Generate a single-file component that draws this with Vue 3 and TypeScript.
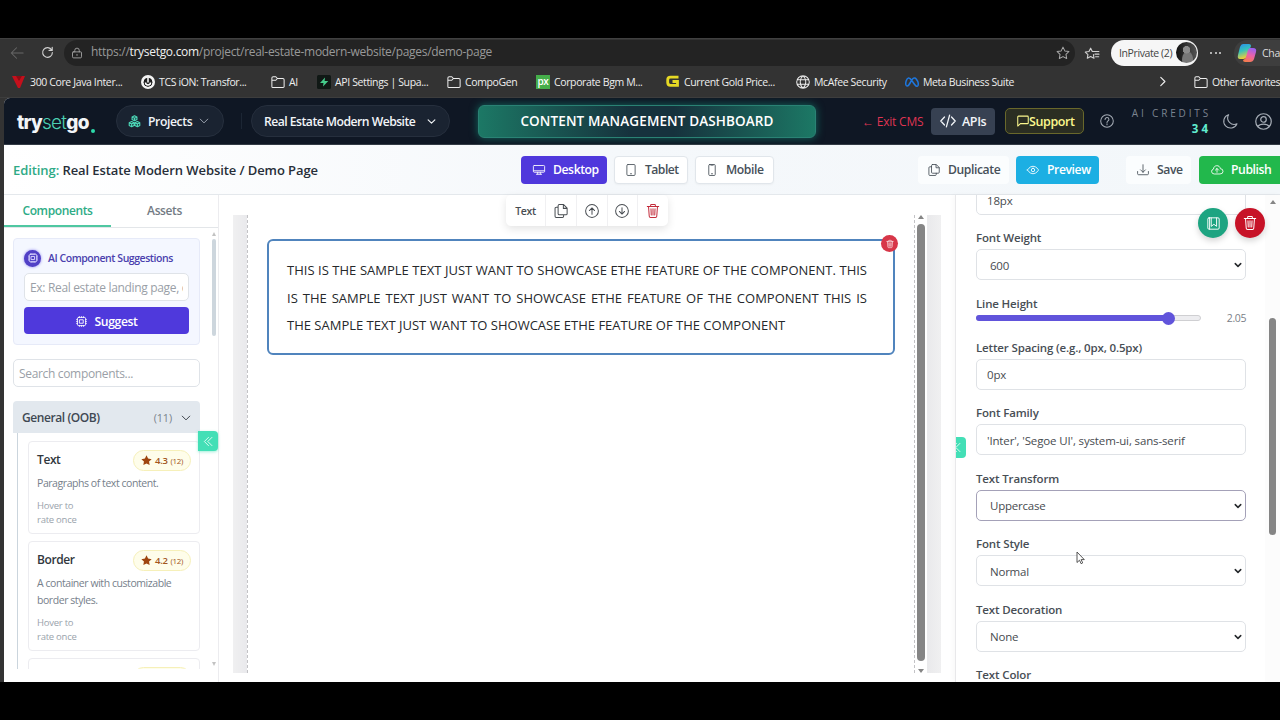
<script setup lang="ts">
import { h, type FunctionalComponent } from 'vue'

const paths: Record<string, string[]> = {
  back: ['M15 8H1.5M7.5 2 1.5 8l6 6'],
  reload: ['M13.2 5A6 6 0 1 0 14 8M13.8 1.5V5.4H9.9'],
  lock: ['M3 6.5h10a1 1 0 0 1 1 1V13a1.5 1.5 0 0 1-1.5 1.5h-9A1.5 1.5 0 0 1 2 13V7.500a1 1 0 0 1 1-1zM5 6.500V4.500a3 3 0 0 1 6 0v2M8 9.800v1.500'],
  star: ['M8 1.300l2.100 4.300 4.700.7-3.400 3.300.8 4.700L8 12.100l-4.200 2.200.8-4.700L1.200 6.300l4.700-.7z'],
  favorites: ['M8.500 9.800l.6 4.200-3.800-2-3.800 2 .7-4.200-3-2.900 4.200-.6 1.900-3.800 1.900 3.800h7.500M10.300 9.300h4.500M11 12.300h3.500'],
  folder: ['M1 13V3.500A1.500 1.500 0 0 1 2.500 2h3l1.800 2h6.200A1.500 1.500 0 0 1 15 5.500V13a1.200 1.200 0 0 1-1.200 1.200H2.200A1.200 1.200 0 0 1 1 13zM1 6h4.500l1.800-2'],
  globe: ['M8 .8a7.200 7.200 0 1 0 0 14.400A7.200 7.200 0 0 0 8 .8zM8 .8c-4.300 4-4.300 10.400 0 14.400M8 .8c4.300 4 4.300 10.400 0 14.400M1.300 5.500h13.400M1.300 10.500h13.400'],
  right: ['M5.500 2l6 6-6 6'],
  down: ['M2 5l6 6 6-6'],
  doubleLeft: ['M8 2 2 8l6 6M13 2 7 8l6 6'],
  boxes: ['M8 1l3 1.500v3L8 7 5 5.500v-3zM5 2.500 8 4l3-1.500M8 4v3M4.500 8l3 1.500v3.500l-3 1.500-3-1.500V9.500zM1.500 9.500l3 1.500 3-1.500M4.500 11v3.500M11.500 8l3 1.500v3.500l-3 1.500-3-1.500V9.500zM8.500 9.500l3 1.500 3-1.500M11.500 11v3.500'],
  code: ['M4.500 4 .8 8l3.700 4M11.500 4l3.700 4-3.700 4M9.600 2.200 6.400 13.800'],
  chat: ['M2 1.500h12a1 1 0 0 1 1 1v8a1 1 0 0 1-1 1H4.500L1 14.700V2.500a1 1 0 0 1 1-1z'],
  help: ['M8 .8a7.200 7.200 0 1 0 0 14.400A7.200 7.200 0 0 0 8 .8zM5.800 6.300C5.800 3.300 10.200 3.500 10.200 6.200 10.200 7.800 8 7.800 8 9.600M8 11.200v1'],
  moon: ['M6 .7a6.900 6.900 0 0 0 8.900 9.700A7.300 7.300 0 1 1 6 .7z'],
  person: ['M8 .7a7.300 7.300 0 1 0 0 14.600A7.300 7.300 0 0 0 8 .7zM8 3.500a2.600 2.600 0 1 0 0 5.200 2.600 2.600 0 0 0 0-5.200zM2.700 12.700C4 10.600 6 10.500 8 10.500s4 .1 5.300 2.200'],
  display: ['M1.700 2h12.600a1.200 1.200 0 0 1 1.200 1.200v6.600a1.200 1.200 0 0 1-1.200 1.200H1.700A1.200 1.200 0 0 1 .5 9.800V3.200A1.200 1.200 0 0 1 1.700 2zM1 9h14M6.300 11v2.500M9.700 11v2.500M4.500 13.700h7'],
  tablet: ['M4 .7h8a1.500 1.500 0 0 1 1.500 1.500v11.600a1.500 1.500 0 0 1-1.500 1.500H4a1.500 1.500 0 0 1-1.500-1.500V2.200A1.500 1.500 0 0 1 4 .7zM7.300 13h1.400'],
  phone: ['M5 .7h6a1.300 1.300 0 0 1 1.300 1.300v12a1.300 1.300 0 0 1-1.300 1.300H5A1.300 1.300 0 0 1 3.700 14V2A1.300 1.300 0 0 1 5 .7zM7.300 13h1.400M6.500 1.500h3'],
  copy: ['M6 .7h5l4 4V11a1.300 1.300 0 0 1-1.300 1.300H6A1.300 1.300 0 0 1 4.700 11V2A1.300 1.300 0 0 1 6 .7zM10.700 1v4h4M4.700 3.700H2.500A1.300 1.300 0 0 0 1.200 5v9a1.300 1.300 0 0 0 1.300 1.300h7.200A1.300 1.300 0 0 0 11 14v-1.700'],
  eye: ['M.6 8S3.300 3 8 3s7.400 5 7.400 5-2.700 5-7.400 5S.6 8 .6 8zM8 5.700a2.300 2.300 0 1 0 0 4.600 2.300 2.300 0 0 0 0-4.600z'],
  download: ['M.8 10v3a1.300 1.300 0 0 0 1.300 1.300h11.800a1.300 1.300 0 0 0 1.300-1.300v-3M8 1v10M4.800 7.800 8 11l3.200-3.200'],
  cloud: ['M4 13.300a3.300 3.300 0 0 1-.7-6.500C3.500 1 11.700.6 12.500 6.300a3.500 3.500 0 0 1 0 7zM8 11V6M5.800 8.200 8 6l2.200 2.200'],
  cpu: ['M4 2h8a2 2 0 0 1 2 2v8a2 2 0 0 1-2 2H4a2 2 0 0 1-2-2V4a2 2 0 0 1 2-2zM5.500 5.500h5v5h-5zM5 1v1M8 1v1M11 1v1M5 14v1M8 14v1M11 14v1M1 5h1M1 8h1M1 11h1M14 5h1M14 8h1M14 11h1'],
  up: ['M8 .7a7.300 7.300 0 1 0 0 14.600A7.300 7.300 0 0 0 8 .7zM8 11.700V4.500M5 7.500l3-3 3 3'],
  downCircle: ['M8 .7a7.300 7.300 0 1 0 0 14.600A7.300 7.300 0 0 0 8 .7zM8 4.300v7.200M5 8.500l3 3 3-3'],
  trash: ['M1.500 2.800h13M5.300 2.500V1.300A.8.8 0 0 1 6 .6h4a.8.8 0 0 1 .7.7v1.200M2.900 3l.8 10.900a1.500 1.500 0 0 0 1.500 1.400h5.600a1.500 1.500 0 0 0 1.500-1.400L13.100 3M5.700 5.500l.3 7M8 5.500v7M10.300 5.500l-.3 7'],
  journal: ['M2.500 1h11A1.500 1.500 0 0 1 15 2.500v11a1.500 1.500 0 0 1-1.500 1.500h-11A1.500 1.500 0 0 1 1 13.500v-11A1.500 1.500 0 0 1 2.500 1zM3.200 1v14M5.200 1.200V11.500L8.500 9l3.300 2.500V1.200'],
  caret: ['M2.500 5.200 8 10.700l5.500-5.500'],
}

const Icon: FunctionalComponent<{ name: string; size?: number; weight?: number }> = (props) =>
  h(
    'svg',
    {
      viewBox: '0 0 16 16',
      width: props.size ?? 12,
      height: props.size ?? 12,
      fill: 'none',
      stroke: 'currentColor',
      'stroke-width': props.weight ?? 1.15,
      'stroke-linecap': 'round',
      'stroke-linejoin': 'round',
      overflow: 'visible',
    },
    (paths[props.name] ?? []).map((d) => h('path', { d })),
  )
Icon.props = ['name', 'size', 'weight']

const bookmarks = [
  { icon: 'java', label: '300 Core Java Inter...' },
  { icon: 'tcs', label: 'TCS iON: Transfor...' },
  { icon: 'folder', label: 'AI' },
  { icon: 'supa', label: 'API Settings | Supa...' },
  { icon: 'folder', label: 'CompoGen' },
  { icon: 'px', label: 'Corporate Bgm M...' },
  { icon: 'gold', label: 'Current Gold Price...' },
  { icon: 'globe', label: 'McAfee Security' },
  { icon: 'meta', label: 'Meta Business Suite' },
]

const components = [
  { name: 'Text', rating: '4.3', votes: '(12)', text: 'Paragraphs of text content.' },
  { name: 'Border', rating: '4.2', votes: '(12)', text: 'A container with customizable border styles.' },
]

const lower = [
  { label: 'Letter Spacing (e.g., 0px, 0.5px)', value: '0px', select: false },
  { label: 'Font Family', value: "'Inter', 'Segoe UI', system-ui, sans-serif", select: false },
  { label: 'Text Transform', value: 'Uppercase', select: true, focus: true },
  { label: 'Font Style', value: 'Normal', select: true },
  { label: 'Text Decoration', value: 'None', select: true },
]
</script>

<template>
  <div class="screen">
    <div class="window">
      <div class="address-row">
        <Icon class="back" name="back" :size="14" />
        <Icon class="reload" name="reload" :size="13" :weight="1.4" />
        <div class="address">
          <Icon name="lock" :size="12" />
          <span class="url">https://<b>trysetgo.com</b>/project/real-estate-modern-website/pages/demo-page</span>
          <Icon class="addr-star" name="star" :size="14" />
        </div>
        <Icon class="favs" name="favorites" :size="14" :weight="1.3" />
        <div class="inprivate"><span>InPrivate (2)</span><i class="avatar"></i></div>
        <span class="dots"><i></i><i></i><i></i></span>
        <div class="copilot">
          <svg width="20" height="20" viewBox="0 0 20 20">
            <defs>
              <linearGradient id="cpa" x1="0" y1="0" x2="0.3" y2="1"><stop offset="0" stop-color="#2a8cf0" /><stop offset=".5" stop-color="#35c3ba" /><stop offset="1" stop-color="#f0cd38" /></linearGradient>
              <linearGradient id="cpb" x1="0.6" y1="0" x2="0.3" y2="1"><stop offset="0" stop-color="#9a62ee" /><stop offset=".5" stop-color="#ec62a8" /><stop offset="1" stop-color="#f47c4c" /></linearGradient>
            </defs>
            <path d="M6 1h6q2 0 2 2l-4 10q-1 3-4 3H3q-3 0-2-4l2-8q1-3 3-3z" fill="url(#cpa)" />
            <path d="M13 5h3q4 0 3 4l-2 7q-1 3-4 3H8q-2 0-2-2 2 0 3-3l2-7q1-2 2-2z" fill="url(#cpb)" />
          </svg>
          <span>Chat</span>
        </div>
      </div>

      <div class="bookmarks">
        <div v-for="b in bookmarks" :key="b.label" class="bookmark">
          <svg v-if="b.icon === 'java'" width="14" height="14" viewBox="0 0 14 14"><path d="M0 1h5l2 4 2-4h4L8 13H6z" fill="#c4101c" /><path d="M4 1h6l-3 5z" fill="#8e0c14" /></svg>
          <svg v-else-if="b.icon === 'tcs'" width="14" height="14" viewBox="0 0 14 14"><circle cx="7" cy="7" r="7" fill="#f4f4f4" /><circle cx="7" cy="7.300" r="4" fill="#222" stroke="#111" /><path d="M7 3v4.500M4.500 7.500A2.500 2.500 0 0 0 9.500 7.500" stroke="#fff" stroke-width="1.500" fill="none" /></svg>
          <svg v-else-if="b.icon === 'supa'" width="14" height="14" viewBox="0 0 14 14"><rect width="14" height="14" rx="1.500" fill="#101815" /><path d="M8 2.500 3 8h3.500L6 11.500 11.300 6H7.600z" fill="#46cc8b" /></svg>
          <span v-else-if="b.icon === 'px'" class="px">px</span>
          <svg v-else-if="b.icon === 'gold'" width="14" height="14" viewBox="0 0 14 14"><path d="M12.500 2.200H4.500Q1.700 2.200 1.700 5v2.500q0 2.800 2.800 2.800h7V6.500H6.500" fill="none" stroke="#e6d925" stroke-width="2.800" /></svg>
          <svg v-else-if="b.icon === 'meta'" width="14" height="14" viewBox="0 0 14 14" fill="none" stroke="#1e77de" stroke-width="1.500"><path d="M7 6C5.500 3.500 4.300 2.700 3.200 3.100 1.500 3.700.5 7.200.8 9.500c.3 2 1.900 2.100 3 .5C5 8.300 6 6.200 7.200 4.500c1.200-1.700 2.900-2 4.200-.3C13 6.200 13.500 9 13 10.500c-.6 1.200-1.900.9-2.700-.2C9.200 9 8.200 7.500 7 6z" /></svg>
          <Icon v-else :name="b.icon" :size="14" />
          <span>{{ b.label }}</span>
        </div>
        <Icon class="more" name="right" :size="11" :weight="1.7" />
        <div class="bookmark"><Icon name="folder" :size="14" /><span>Other favorites</span></div>
      </div>

      <div class="page">
        <header class="nav">
          <div class="logo">try<span>set</span>go<i></i></div>
          <div class="pill projects"><Icon class="mint" name="boxes" :size="13" :weight="1.4" /><span>Projects</span><Icon name="down" :size="10" :weight="1.5" /></div>
          <i class="nav-line"></i>
          <div class="pill site"><span>Real Estate Modern Website</span><Icon name="down" :size="9" :weight="2" /></div>
          <div class="banner">CONTENT MANAGEMENT DASHBOARD</div>
          <span class="exit">← Exit CMS</span>
          <div class="apis"><Icon name="code" :size="16" :weight="1.3" /><span>APIs</span></div>
          <div class="support"><Icon name="chat" :size="12" :weight="1.4" /><span>Support</span></div>
          <Icon class="nav-icon help" name="help" :size="14" />
          <div class="credits"><span>AI CREDITS</span><b>34</b></div>
          <Icon class="nav-icon moon" name="moon" :size="15" />
          <Icon class="nav-icon person" name="person" :size="17" />
        </header>

        <div class="toolbar">
          <div class="editing"><span>Editing:</span> Real Estate Modern Website / Demo Page</div>
          <div class="devices">
            <div class="btn desktop"><Icon name="display" /><span>Desktop</span></div>
            <div class="btn outline tablet"><Icon name="tablet" /><span>Tablet</span></div>
            <div class="btn outline mobile"><Icon name="phone" /><span>Mobile</span></div>
          </div>
          <div class="actions">
            <div class="btn light duplicate"><Icon name="copy" /><span>Duplicate</span></div>
            <div class="btn preview"><Icon name="eye" /><span>Preview</span></div>
            <i class="divider"></i>
            <div class="btn light save"><Icon name="download" /><span>Save</span></div>
            <div class="btn publish"><Icon name="cloud" /><span>Publish</span></div>
          </div>
        </div>

        <div class="workspace">
          <aside class="left">
            <div class="tabs"><div class="tab active">Components</div><div class="tab">Assets</div></div>
            <div class="left-scroll">
              <div class="ai">
                <div class="ai-head"><i class="ai-badge"><Icon name="cpu" :size="10" :weight="1.5" /></i><span>AI Component Suggestions</span></div>
                <div class="input ai-input"><span>Ex: Real estate landing page, contact</span></div>
                <div class="suggest"><Icon name="cpu" :size="11" :weight="1.3" /><span>Suggest</span></div>
              </div>
              <div class="input search">Search components...</div>
              <div class="group-head"><b>General (OOB)</b><span>(11)</span><Icon name="down" :size="10" :weight="1.5" /></div>
              <div class="group">
                <div v-for="c in components" :key="c.name" class="card">
                  <div class="card-top">
                    <b>{{ c.name }}</b>
                    <span class="rating"><svg width="11" height="11" viewBox="0 0 16 16"><path d="M8 .5l2.300 4.700 5.200.8-3.800 3.600.9 5.100L8 12.300l-4.600 2.400.9-5.100L.5 6l5.200-.8z" fill="#9f450f" /></svg><b>{{ c.rating }}</b><small>{{ c.votes }}</small></span>
                  </div>
                  <p>{{ c.text }}</p>
                  <div class="hover">Hover to<br />rate once</div>
                </div>
                <div class="card"><div class="card-top"><b></b><span class="rating"></span></div></div>
              </div>
            </div>
            <div class="thin-scroll"><i class="tri up"></i><i class="thin-thumb"></i><i class="tri down"></i></div>
            <div class="collapse"><Icon name="doubleLeft" :size="11" /></div>
          </aside>

          <main class="canvas">
            <div class="frame">
              <i class="strip"></i>
              <div class="paper">
                <div class="text-block">
                  THIS IS THE SAMPLE TEXT JUST WANT TO SHOWCASE ETHE FEATURE OF THE COMPONENT. THIS IS THE SAMPLE TEXT JUST WANT TO SHOWCASE ETHE FEATURE OF THE COMPONENT THIS IS THE SAMPLE TEXT JUST WANT TO SHOWCASE ETHE FEATURE OF THE COMPONENT
                  <span class="remove"><Icon name="trash" :size="8" /></span>
                </div>
              </div>
              <div class="scroll"><i class="tri up"></i><i class="thumb"></i><i class="tri down"></i></div>
              <i class="strip right-strip"></i>
            </div>
            <div class="float-bar">
              <span>Text</span>
              <i><Icon name="copy" :size="14" /></i>
              <i><Icon name="up" :size="14" /></i>
              <i><Icon name="downCircle" :size="14" /></i>
              <i class="red"><Icon name="trash" :size="14" /></i>
            </div>
          </main>

          <aside class="right">
            <div class="form">
              <div class="control first">18px</div>
              <label>Font Weight</label>
              <div class="control select"><span>600</span><Icon name="caret" :size="8" :weight="3" /></div>
              <label>Line Height</label>
              <div class="slider"><div class="track"><i class="fill"></i><i class="knob"></i></div><span>2.05</span></div>
              <template v-for="f in lower" :key="f.label">
                <label>{{ f.label }}</label>
                <div class="control" :class="{ select: f.select, focus: f.focus }"><span>{{ f.value }}</span><Icon v-if="f.select" name="caret" :size="8" :weight="3" /></div>
              </template>
              <label>Text Color</label>
            </div>
            <div class="panel-scroll"><i class="tri up"></i><i class="thumb"></i></div>
            <div class="round save-round"><Icon name="journal" :size="13" /></div>
            <div class="round del-round"><Icon name="trash" :size="14" /></div>
            <div class="expand"><Icon name="doubleLeft" :size="11" /></div>
          </aside>
        </div>
      </div>
    </div>
    <svg class="cursor" width="9" height="14" viewBox="0 0 9 14"><path d="M1 1v10.500l2.500-2.300 1.600 3.500 1.600-.8-1.600-3.300H8.300z" fill="#fff" stroke="#444" stroke-width=".9" /></svg>
  </div>
</template>

<style>
html, body { margin: 0; background: #000; }
</style>

<style scoped>
* { box-sizing: border-box; }
i { font-style: normal; }
svg { display: block; flex: none; }
.screen { position: relative; width: 1280px; height: 720px; padding: 38px 0; background: #000; overflow: hidden; font-family: "Open Sans", "Noto Sans", sans-serif; color: #333a42; white-space: nowrap; }
.window { height: 644px; background: #333; overflow: hidden; display: flex; flex-direction: column; }

.address-row { height: 28px; display: flex; align-items: center; flex: none; border-top: 1px solid #404040; }
.address-row > * { flex: none; }
.back { margin-left: 10px; color: #686868; }
.reload { margin-left: 17px; color: #d0d0d0; }
.address { margin-left: 10px; width: 1011px; height: 26px; border-radius: 13px; background: #232323; display: flex; align-items: center; padding: 0 5px 0 7px; color: #aaa; }
.url { margin-left: 8px; margin-top: -2px; font-size: 12px; letter-spacing: -.3px; color: #999; }
.url b { font-weight: 400; color: #f0f0f0; }
.addr-star { margin-left: auto; }
.favs { margin-left: 11px; color: #d0d0d0; }
.inprivate { margin-left: 11px; width: 87px; height: 26px; border-radius: 13px; background: #f6f6f6; display: flex; align-items: center; padding-left: 8px; font-size: 10.500px; letter-spacing: -.4px; color: #444; }
.avatar { margin-left: auto; margin-right: 1px; width: 21px; height: 21px; border-radius: 50%; background: radial-gradient(circle at 50% 37%, #8b8b8b 0 3.500px, transparent 4px), radial-gradient(ellipse at 55% 85%, #777 0 5px, transparent 6px), linear-gradient(90deg, #111, #555); }
.dots { margin-left: 12px; width: 11px; display: flex; justify-content: space-between; }
.dots i { width: 2px; height: 2px; border-radius: 1px; background: #ddd; }
.copilot { margin-left: 13px; height: 26px; width: 60px; border-radius: 13px 0 0 13px; background: #3e3e3e; display: flex; align-items: center; padding-left: 3px; color: #ddd; font-size: 10.500px; letter-spacing: -.3px; gap: 5px; }

.bookmarks { height: 32px; flex: none; display: grid; align-items: center; padding-left: 12px; grid-template-columns: 129px 130px 46px 130px 89px 130px 130px 109px 252px 37px 100px; border-bottom: 1px solid #3d3d3d; font-size: 10.500px; letter-spacing: -.37px; color: #eee; }
.bookmark { display: flex; align-items: center; gap: 4px; }
.px { width: 14px; height: 14px; background: #45ae4a; color: #fff; font-size: 10px; line-height: 12px; text-align: center; font-weight: 600; }

.page { margin-left: 4px; height: 584px; border-radius: 6px 0 0 0; background: #fff; overflow: hidden; display: flex; flex-direction: column; }
.nav { height: 47px; flex: none; background: #0f1724; border-bottom: 1px solid #333b45; display: flex; align-items: center; color: #f2f5f8; }
.logo { margin-left: 13px; padding-top: 2px; width: 78px; display: flex; align-items: baseline; font-family: Inter, sans-serif; font-size: 19px; font-weight: 800; letter-spacing: -.75px; }
.logo span { font-weight: 300; color: #4ccfb2; }
.logo i { flex: none; width: 4px; height: 4px; border-radius: 50%; background: #2cd9a9; margin-left: 2px; align-self: flex-end; margin-bottom: 1px; }
.pill { height: 32px; border-radius: 16px; background: #1a2331; border: 1px solid #262f3d; display: flex; align-items: center; font-size: 12.200px; font-weight: 600; letter-spacing: -.4px; }
.projects { margin-left: 21px; width: 108px; padding: 0 14px 0 11px; }
.projects span { margin: 0 auto 0 7px; }
.mint { color: #4cd8b8; }
.projects svg:last-child { color: #a3abb6; }
.nav-line { margin-left: 17px; width: 1px; height: 16px; background: #1c2634; }
.site { margin-left: 9px; width: 199px; padding: 0 13px 0 12px; justify-content: space-between; }
.site span { letter-spacing: -.52px; }
.banner { margin-left: 28px; width: 338px; height: 33px; border-radius: 6px; border: 1px solid #2a8274; background: linear-gradient(90deg, #1c7865 0%, #16323d 45%, #16323d 58%, #1c7865 100%); box-shadow: 0 0 9px #13695f; display: flex; align-items: center; justify-content: center; font-size: 13.500px; font-weight: 600; letter-spacing: .12px; color: #fff; }
.exit { margin-left: 46px; width: 68px; font-size: 12px; letter-spacing: -.2px; color: #df3452; }
.apis { width: 64px; height: 27px; border-radius: 4px; background: #374152; display: flex; align-items: center; gap: 6px; padding-left: 9px; font-size: 12.500px; font-weight: 600; letter-spacing: -.4px; margin-left: 1px; }
.support { margin-left: 10px; width: 79px; height: 26px; border-radius: 5px; border: 1px solid #69682b; background: #2b2e22; color: #fcf88d; display: flex; align-items: center; padding-left: 11px; font-size: 12.500px; font-weight: 600; letter-spacing: -.4px; }
.nav-icon { color: #a6adb6; }
.help { margin-left: 16px; }
.credits { margin-left: 14px; width: 83px; display: flex; flex-direction: column; align-items: flex-end; font-size: 10px; letter-spacing: 2.850px; color: #7c8490; line-height: 15px; }
.credits b { font-size: 11.500px; letter-spacing: 3px; color: #61ecd0; font-weight: 700; }
.moon { margin-left: 12px; }
.person { margin-left: 17px; }

.toolbar { height: 50px; flex: none; border-bottom: 1px solid #e4e8ec; background: linear-gradient(90deg, #fff 0, #f5f8fb 45%, #f3f7fa 100%); display: flex; align-items: center; position: relative; }
.editing { margin-left: 9px; width: 508px; flex: none; font-size: 13px; font-weight: 600; letter-spacing: -.08px; color: #272e38; }
.editing span { color: #2eaa86; }
.devices { display: flex; gap: 7px; width: 397px; flex: none; }
.btn { height: 28px; border-radius: 4px; display: flex; align-items: center; font-size: 12.200px; font-weight: 600; letter-spacing: -.42px; color: #fff; gap: 8px; padding-left: 12px; flex: none; }
.desktop { width: 86px; background: #4f38dc; }
.outline { background: #fff; border: 1px solid #e1e6eb; color: #475059; box-shadow: 0 1px 2px #0000000a; padding-left: 10px; }
.tablet { width: 74px; letter-spacing: -.55px; }
.mobile { width: 79px; }
.actions { display: flex; align-items: center; width: 366px; flex: none; }
.light { background: #fbfdfe; color: #475059; padding-left: 10px; }
.duplicate { width: 91px; }
.preview { margin-left: 7px; width: 83px; background: #1cafe3; padding-left: 11px; }
.divider { width: 1px; height: 20px; margin: 0 14px 0 13px; background: #dce2e8; }
.save { width: 65px; padding-left: 11px; }
.publish { margin-left: 8px; width: 90px; background: #22b84c; }

.workspace { height: 487px; display: flex; }
.left { width: 215px; flex: none; position: relative; border-right: 1px solid #ececef; }
.tabs { height: 33px; display: flex; border-bottom: 1px solid #e3e6e9; font-size: 12px; font-weight: 600; letter-spacing: -.38px; color: #737b84; }
.tab { width: 107px; height: 32px; line-height: 32px; text-align: center; }
.active { color: #2eac86; border-bottom: 2px solid #4fc7a1; }
.left-scroll { height: 441px; padding: 10px 0 0 9px; width: 196px; overflow: hidden; }
.ai { height: 107px; width: 187px; border: 1px solid #e6eaf8; border-radius: 4px; background: #f4f7ff; padding: 10px; }
.ai-head { display: flex; align-items: center; height: 18px; gap: 7px; font-size: 10.500px; font-weight: 600; letter-spacing: -.45px; color: #4a3fae; }
.ai-badge { width: 17px; height: 17px; border-radius: 50%; background: #5140c6; color: #dcd8ff; display: flex; align-items: center; justify-content: center; box-shadow: 0 0 3px #8b80ee; }
.input { border: 1px solid #dfe3e8; border-radius: 5px; background: #fff; height: 28px; display: flex; align-items: center; font-size: 12px; letter-spacing: -.33px; color: #9a9fa7; padding: 0 5px; overflow: hidden; }
.ai-input { margin-top: 6px; }
.ai-input span { overflow: hidden; }
.suggest { margin-top: 6px; height: 27px; border-radius: 4px; background: #4f39dc; color: #fff; font-size: 12.200px; font-weight: 600; letter-spacing: -.4px; display: flex; gap: 8px; align-items: center; justify-content: center; padding-top: 1px; }
.search { margin-top: 14px; width: 187px; }
.group-head { margin-top: 14px; height: 32px; width: 187px; border-radius: 4px 4px 0 0; background: #e2e8ee; display: flex; align-items: center; padding: 1px 9px 0 9px; font-size: 12px; letter-spacing: -.42px; }
.group-head b { font-weight: 600; color: #3f4853; margin-right: auto; }
.group-head span { font-size: 10.800px; letter-spacing: -.1px; color: #7a838d; margin-right: 9px; }
.group { margin-left: 4px; border-left: 1px solid #cbd5dd; padding: 8px 0 0 10px; height: 260px; }
.card { width: 172px; height: 93px; border: 1px solid #ececf0; border-radius: 4px; background: #fff; padding: 8px; margin-bottom: 7px; }
.card:nth-child(2) { height: 110px; }
.card-top { display: flex; justify-content: space-between; height: 21px; }
.card-top > b { font-size: 12px; font-weight: 600; letter-spacing: -.4px; line-height: 20px; color: #31373d; }
.rating { width: 58px; height: 21px; border: 1px solid #f6f0b9; border-radius: 11px; background: #fefdea; display: flex; align-items: center; padding-left: 7px; gap: 3px; color: #a2571f; font-size: 9.500px; }
.rating b { font-weight: 600; letter-spacing: -.3px; }
.rating small { font-size: 8px; letter-spacing: -.35px; }
.card p { margin: 4px 0 0; font-size: 10.500px; line-height: 17px; letter-spacing: -.44px; color: #76808b; white-space: normal; width: 150px; }
.hover { margin-top: 7px; font-size: 9.500px; line-height: 14px; letter-spacing: -.25px; color: #9aa3ac; }
.thin-scroll { position: absolute; left: 206px; top: 34px; height: 440px; width: 8px; display: flex; flex-direction: column; align-items: center; padding: 3px 0; }
.thin-thumb { margin-top: 3px; width: 4px; height: 97px; border-radius: 2px; background: #cdd6dd; }
.tri { width: 0; height: 0; border: 3px solid transparent; border-width: 0 3px 4px; border-bottom-color: #858585; }
.tri.down { border-width: 4px 3px 0; border-top-color: #858585; margin-top: auto; }
.thin-scroll .tri { opacity: .5; border-left-width: 2px; border-right-width: 2px; }
.collapse { position: absolute; left: 194px; top: 236px; width: 20px; height: 20px; border-radius: 0 4px 4px 0; background: #43dfb6; color: #fff; display: flex; align-items: center; justify-content: center; box-shadow: 0 1px 3px #43dfb680; }

.canvas { width: 736px; flex: none; position: relative; padding: 20px 14px 0; }
.frame { height: 458px; display: flex; }
.strip { width: 14px; background: linear-gradient(90deg, #f0f0f1, #e9e9ec); }
.right-strip { background: linear-gradient(90deg, #e9e9eb, #f0f0f1); }
.paper { width: 668px; flex: none; border-left: 1px dashed #c3c3c6; border-right: 1px dashed #c3c3c6; padding: 24px 19px 0; }
.text-block { position: relative; width: 628px; height: 116px; border: 2px solid #5084bd; border-radius: 6px; padding: 16px 26px 0 18px; font-family: "Open Sans", sans-serif; font-size: 13px; letter-spacing: 0; line-height: 27.700px; color: #25282b; text-align: justify; white-space: normal; }
.remove { position: absolute; right: -5px; top: -6px; width: 17px; height: 17px; border-radius: 50%; background: #d73648; color: #fff; display: flex; align-items: center; justify-content: center; }
.scroll { width: 12px; display: flex; flex-direction: column; align-items: center; }
.scroll .thumb { margin-top: 5px; width: 8px; height: 437px; border-radius: 4px; background: #858585; }
.float-bar { position: absolute; left: 287px; top: 0; width: 162px; height: 31px; border-radius: 5px; background: #fff; box-shadow: 0 3px 8px #0000001c; display: grid; grid-template-columns: 39px repeat(4, 1fr); color: #484d52; font-size: 10.500px; font-weight: 600; letter-spacing: -.3px; }
.float-bar > * { display: flex; align-items: center; justify-content: center; }
.float-bar > i { border-left: 1px solid #f0f0f2; }
.float-bar .red { color: #c32b3b; }

.right { width: 325px; flex: none; position: relative; border-left: 1px solid #e8e8ea; overflow: hidden; box-shadow: -2px 0 5px #00000008; }
.form { margin: -11.500px 0 0 20px; width: 270px; }
.form label { display: block; padding-top: 11.500px; height: 34.500px; line-height: 23px; font-size: 11.500px; font-weight: 600; letter-spacing: -.15px; color: #484e55; }
.control { height: 31px; width: 270px; border: 1px solid #dfe2e6; border-radius: 5px; display: flex; align-items: center; justify-content: space-between; padding: 1px 3px 0 10px; font-size: 11.500px; letter-spacing: -.14px; color: #474b50; }
.first { padding-top: 3px; }
.select { padding-left: 13px; letter-spacing: -.22px; }
.select svg { color: #25282b; }
.focus { border-color: #a4a1b8; }
.slider { height: 9.900px; display: flex; justify-content: space-between; font-size: 10.500px; color: #7b8088; letter-spacing: -.4px; }
.slider > span { line-height: 7px; }
.track { position: relative; width: 225px; height: 6px; border-radius: 3px; border: 1px solid #cfcfd2; background: #ededf0; }
.fill { position: absolute; left: -1px; top: -1px; width: 193px; height: 6px; border-radius: 3px; background: #6154db; }
.knob { position: absolute; left: 185px; top: -4px; width: 13px; height: 13px; border-radius: 50%; background: #6154db; }
.panel-scroll { position: absolute; top: 0; right: 0; width: 15px; height: 487px; background: #fcfcfc; display: flex; flex-direction: column; align-items: center; padding-top: 5px; }
.panel-scroll .thumb { margin-top: 114px; width: 7px; height: 217px; background: #858585; border-radius: 4px; }
.round { position: absolute; top: 13px; width: 30px; height: 30px; border-radius: 50%; color: #fff; display: flex; align-items: center; justify-content: center; box-shadow: 0 3px 6px #0000002b; }
.save-round { left: 242px; background: #1da481; }
.del-round { left: 279px; background: #c71227; }
.expand { position: absolute; left: -10px; top: 242px; width: 20px; height: 21px; border-radius: 0 4px 4px 0; background: #43dfb6; color: #fff; display: flex; align-items: center; justify-content: center; }
.cursor { position: absolute; left: 1076px; top: 551px; }
</style>
